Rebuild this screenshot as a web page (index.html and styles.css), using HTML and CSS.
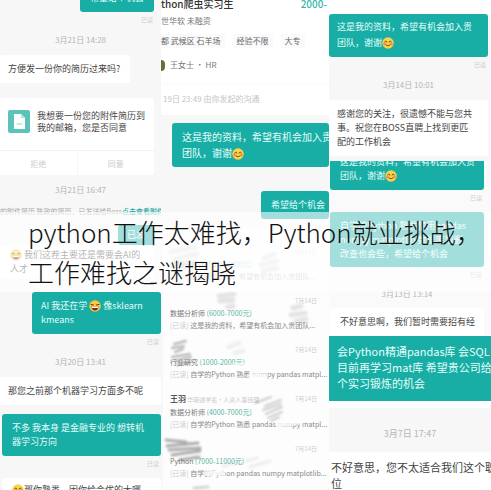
FILE: index.html
```
<!DOCTYPE html>
<html lang="zh-CN">
<head>
    <meta charset="UTF-8">
    <meta name="viewport" content="width=device-width, initial-scale=1.0">
    <title>python工作太难找</title>
    <link rel="stylesheet" href="styles.css">
</head>
<body>
    <svg class="defs" aria-hidden="true">
        <symbol id="smile" viewBox="0 0 24 24">
            <circle cx="12" cy="12" r="11.5" fill="#fbd34b"/>
            <path d="M5 10q2.5-4 5 0M14 10q2.5-4 5 0" fill="none" stroke="#6b3d12" stroke-width="2" stroke-linecap="round"/>
            <circle cx="5" cy="14" r="3" fill="#f58f53"/>
            <circle cx="19" cy="14" r="3" fill="#f58f53"/>
            <path d="M8 16q4 4 8 0" fill="none" stroke="#8c4b16" stroke-width="2" stroke-linecap="round"/>
        </symbol>
        <symbol id="laugh" viewBox="0 0 24 24">
            <circle cx="12" cy="12" r="11.5" fill="#fbc740"/>
            <path d="M4 9l5 1M20 9l-5 1" stroke="#5b3412" stroke-width="2" stroke-linecap="round"/>
            <path d="M5 13h14q-1 8-7 8t-7-8z" fill="#7b2f16"/>
            <path d="M6 13h12v3H6z" fill="#fff"/>
        </symbol>
    </svg>
    <main class="collage">
        <section class="column left">
            <div class="msg mine first">希望给个机会</div>
            <div class="read">已读</div>
            <div class="time">3月21日 14:28</div>
            <div class="msg">方便发一份你的简历过来吗?</div>
            <div class="card">
                <div class="card-body">
                    <svg class="file-icon" viewBox="0 0 22 23">
                        <rect width="22" height="23" rx="2" fill="#5bc3b9"/>
                        <path d="M6 4h7l4 4v11H6z" fill="#fff"/>
                        <path d="M13 4v4h4z" fill="#b5e3de"/>
                        <path d="M9 14h5" stroke="#8bd2cb"/>
                    </svg>
                    <p>我想要一份您的附件简历到<br>我的邮箱，您是否同意</p>
                </div>
                <div class="card-actions">
                    <button type="button">拒绝</button>
                    <button type="button">同意</button>
                </div>
            </div>
            <div class="time">3月21日 16:47</div>
            <div class="notice">的附件简历 陈政的简历，已发送给Boss<a href="#">点击查看附件</a></div>
            <div class="msg mine sent">已发</div>
            <div class="msg wide reply"><svg class="emoji"><use href="#laugh"/></svg> 我们这茬主要还是需要会AI的<br>人才</div>
            <div class="msg mine sk">AI 我还在学 <svg class="emoji"><use href="#laugh"/></svg> 像sklearn kmeans</div>
            <div class="read">已读</div>
            <div class="time">3月20日 13:41</div>
            <div class="msg full">那您之前那个机器学习方面多不呢</div>
            <div class="msg mine full">不多 我本身 是金融专业的 想转机<br>器学习方向</div>
            <div class="read">已读</div>
            <div class="msg full"><svg class="emoji"><use href="#smile"/></svg>那你熟悉，因你给会优的大哪</div>
        </section>

        <section class="column middle">
            <header class="job">
                <div class="job-title"><h2>thon爬虫实习生</h2><span class="salary">2000-</span></div>
                <div class="company">世华软 未融资</div>
                <div class="tags"><span>都 武候区 石羊场</span><span>经验不限</span><span>大专</span></div>
                <div class="hr"><i class="avatar"></i>王女士 · HR</div>
                <div class="started">19日 23:49 由你发起的沟通</div>
            </header>
            <div class="msg mine intro">这是我的资料，希望有机会加入贵<br>团队，谢谢<svg class="emoji"><use href="#smile"/></svg></div>
            <div class="msg mine chance">希望给个机会</div>
            <div class="chats">
                <div class="chat faded">
                    <div class="who"><span></span><time>7月14日</time></div>
                    <div class="role">数据分析师 <b>(6000-8000元)</b></div>
                    <div class="last"><i>[已读]</i> 这是我的资料，希望有机会加入贵团队...</div>
                </div>
                <div class="chat">
                    <div class="who"><span></span><time>7月14日</time></div>
                    <div class="role">数据分析师 <b>(6000-7000元)</b></div>
                    <div class="last"><i>[已读]</i> 这是我的资料，希望有机会加入贵团队...</div>
                </div>
                <div class="chat">
                    <div class="who"><span></span><time>7月14日</time></div>
                    <div class="role">行业研究 <b>(1000-2000元)</b></div>
                    <div class="last"><i>[已读]</i> 自学的Python 熟悉 numpy pandas matpl...</div>
                </div>
                <div class="chat">
                    <div class="who"><span><strong>王羽</strong> 华朝通学名·人资人事经理</span><time>7月14日</time></div>
                    <div class="role">数据分析师 <b>(4000-7000元)</b></div>
                    <div class="last"><i>[已读]</i> 自学的Python 熟悉 pandas numpy matpl...</div>
                </div>
                <div class="chat">
                    <div class="who"><span></span><time>7月14日</time></div>
                    <div class="role">Python <b>(7000-11000元)</b></div>
                    <div class="last"><i>[已读]</i> 自学的Python pandas numpy matplotlib...</div>
                </div>
                <svg class="smudges" viewBox="0 0 166 262" fill="none" stroke-linecap="round">
                    <filter id="soft"><feGaussianBlur stdDeviation="1"/></filter>
                    <g filter="url(#soft)">
                        <path d="M44 244h16M116 196l22-4M88 147h14M70 138h12" stroke="#fff" stroke-width="6" opacity=".8"/>
                        <g stroke="#aaa" stroke-width="5" opacity=".3">
                            <path d="M8 23l24-5M12 30l22-5M18 36l13-3"/>
                            <path d="M101 29l10-4M98 36l16-4M100 42l14-3"/>
                            <path d="M56 67l15-2M57 72l13-1M65 78l5-1"/>
                            <path d="M130 79l8-2M128 86l14-2M133 92l10-2"/>
                            <path d="M66 118l10-4M72 124l8-2" opacity=".5"/>
                        </g>
                        <g stroke="#777" stroke-width="2" opacity=".6">
                            <path d="M11 115l12-3M9 119l12-2M12 123l8-3M9 128l18-3M12 132l16-4M14 136l14-3"/>
                            <path d="M92 174l16-6M102 177l16-6M100 181l18-6M103 185l16-7M105 189l14-6M108 192l8-4" opacity=".6"/>
                        </g>
                        <g stroke="#777" stroke-width="3" opacity=".6">
                            <path d="M3 211l20 2M4 217l31-3M6 221l31-2M9 226l28-4M17 231l19-3"/>
                            <path d="M60 237l16-4M83 232l11-3M87 238l20-6" opacity=".2"/>
                            <path d="M31 259l14-1" opacity=".5"/>
                        </g>
                    </g>
                </svg>
            </div>
        </section>

        <section class="column right">
            <div class="panel panel-top">
                <div class="msg mine full tall">这是我的资料，希望有机会加入贵<br>团队，谢谢<svg class="emoji"><use href="#smile"/></svg></div>
                <div class="read">已读</div>
                <div class="time">3月14日 10:01</div>
                <div class="msg full">感谢您的关注，很遗憾不能与您共<br>事。祝您在BOSS直聘上找到更匹<br>配的工作机会</div>
            </div>
            <div class="panel panel-mid">
                <div class="msg mine full cut">这是我的资料，希望有机会加入贵<br>团队，谢谢<svg class="emoji"><use href="#smile"/></svg></div>
                <div class="read">已读</div>
                <div class="msg mine full">自学的Python 熟悉使用pandas<br>numpy matplotlib 数据库增删<br>改查也会些，希望给个机会</div>
                <div class="read">已读</div>
                <div class="time">3月13日 13:14</div>
                <div class="msg full">不好意思啊，我们暂时需要招有经</div>
            </div>
            <div class="panel panel-end">
                <div class="msg mine">会Python精通pandas库 会SQL<br>目前再学习mat库 希望贵公司给<br>个实习锻炼的机会</div>
                <div class="time">3月7日 17:47</div>
                <div class="msg">不好意思，您不太适合我们这个职<br>位</div>
            </div>
        </section>

        <h1 class="headline">python工作太难找，Python就业挑战，工作难找之谜揭晓</h1>
    </main>
</body>
</html>
```

FILE: styles.css
```
* {
    box-sizing: border-box;
}

body {
    margin: 0;
    font-family: 'Noto Sans CJK SC', sans-serif;
    font-size: 9px;
    line-height: 14px;
    color: #444;
    background-color: #fff;
}

h1, h2, p {
    margin: 0;
}

.defs {
    position: absolute;
    width: 0;
    height: 0;
}

.collage {
    position: relative;
    display: grid;
    grid-template-columns: 161fr 168fr 162fr;
    height: 100vh;
    overflow: hidden;
}

.column {
    display: flex;
    flex-direction: column;
    min-width: 0;
    overflow: hidden;
    background-color: #f7f7f7;
}

/* messages */
.msg {
    align-self: flex-start;
    flex-shrink: 0;
    padding: 7px 10px;
    background-color: #fff;
    border-radius: 3px;
    white-space: nowrap;
}

.mine {
    align-self: flex-end;
    background-color: #18ada5;
    color: #e4fffb;
}

.full {
    align-self: stretch;
}

.emoji {
    width: 12px;
    height: 12px;
    vertical-align: -3px;
}

.read {
    margin: 3px 0 0;
    padding-right: 2px;
    font-size: 6px;
    line-height: 10px;
    text-align: right;
    color: #ccc;
}

.time {
    margin: 9px 0;
    font-size: 8px;
    line-height: 12px;
    text-align: center;
    color: #b5b5b5;
}

/* left column */
.left > .msg {
    margin-left: 2px;
}

.left > .first {
    margin: -9px 7px 0 0;
    padding-top: 0;
}

.left > .first + .read {
    padding-right: 8px;
}

.left > .time + .msg {
    padding-left: 8px;
    margin-left: 0;
}

.left > .read + .msg {
    margin-top: 9px;
    padding-top: 5px;
}

.left > .full + .full {
    margin-top: 9px;
}

.card {
    flex-shrink: 0;
    margin: 15px 7px 0 0;
    background-color: #fff;
    border-radius: 3px;
}

.card-body {
    display: flex;
    gap: 7px;
    padding: 12px 8px 16px;
    line-height: 12px;
    white-space: nowrap;
    border-bottom: 1px solid #f3f3f3;
}

.file-icon {
    flex-shrink: 0;
    width: 22px;
    height: 23px;
}

.card-actions {
    display: flex;
}

.card-actions button {
    flex: 1;
    height: 24px;
    padding: 0;
    border: none;
    background: none;
    font-family: inherit;
    font-size: 8px;
    color: #ccc;
    cursor: pointer;
}

.card-actions button + button {
    border-left: 1px solid #f6f6f6;
}

.notice {
    flex-shrink: 0;
    font-size: 7px;
    line-height: 12px;
    white-space: nowrap;
    color: #aaa;
}

.notice a {
    color: #18a79f;
    font-weight: 500;
    text-decoration: none;
}

.left > .sent {
    margin: 8px 7px 0 0;
    padding: 3px 9px;
}

.left > .wide {
    align-self: stretch;
    margin: 0 7px 0 0;
    padding: 3px 10px;
}

.left > .sk {
    margin: 13px 0 0 32px;
    align-self: stretch;
    padding: 7px 9px;
    white-space: normal;
}

/* middle column */
.job {
    flex-shrink: 0;
    height: 115px;
    background-color: #fff;
    font-size: 8px;
    white-space: nowrap;
}

.job-title {
    display: flex;
    justify-content: space-between;
    margin-top: -3px;
    padding-right: 2px;
    font-size: 10px;
}

.job-title h2 {
    font-size: 10px;
    font-weight: 500;
    color: #333;
}

.salary {
    font-weight: 500;
    color: #35b5ac;
}

.company {
    margin-top: 3px;
    color: #777;
}

.tags {
    display: flex;
    gap: 8px;
    margin-top: 6px;
    color: #666;
}

.tags span {
    padding: 0 4px;
    background-color: #fafafa;
}

.tags span:first-child {
    padding-left: 0;
}

.hr {
    display: flex;
    align-items: center;
    gap: 5px;
    margin-top: 10px;
    color: #777;
}

.avatar {
    width: 4px;
    height: 11px;
    border-radius: 0 6px 6px 0;
    background-color: #6d6b3a;
}

.started {
    margin-top: 12px;
    padding: 7px 2px;
    border-top: 1px solid #fafafa;
    color: #c4c4c4;
}

.intro {
    margin: 8px 0 0 11px;
    align-self: stretch;
    padding: 6px 10px;
    font-size: 10px;
    line-height: 16px;
}

.chance {
    margin-top: 24px;
    padding-right: 4px;
}

.chats {
    position: relative;
    flex: 1;
    margin: 10px 0 0 2px;
    padding: 17px 8px 0 7px;
    background-color: #fdfdfd;
    font-size: 7px;
    line-height: 12px;
    white-space: nowrap;
}

.chat {
    margin-bottom: 13px;
}

.faded {
    opacity: 0.5;
}

.who {
    display: flex;
    justify-content: space-between;
    font-size: 6px;
    color: #ccc;
}

.who time {
    margin-right: 4px;
}

.who strong {
    font-size: 8px;
    font-weight: 500;
    color: #333;
}

.role {
    color: #777;
}

.role b {
    font-weight: 400;
    color: #5bb5a5;
}

.last {
    color: #888;
}

.last i {
    font-style: normal;
    color: #ccc;
}

.smudges {
    position: absolute;
    top: 0;
    left: 0;
    width: 166px;
    height: 262px;
}

/* right column */
.panel {
    flex-shrink: 0;
    display: flex;
    flex-direction: column;
}

.panel-top {
    padding: 14px 3px 5px 0;
    background: linear-gradient(#fff 14px, #f7f7f7 14px);
}

.panel-top .msg,
.panel-end .msg {
    padding-left: 8px;
}

.panel-top .tall {
    padding-top: 5px;
    padding-bottom: 6px;
    line-height: 16px;
}

.panel-mid {
    padding: 0 7px 0 1px;
    overflow: hidden;
    background-color: #fafafa;
}

.panel-mid .cut {
    margin-top: -13px;
}

.panel-mid .read + .msg {
    margin-top: 9px;
    padding-bottom: 6px;
}

.panel-mid .time {
    margin: 8px 0;
}

.panel-end {
    font-size: 11px;
    line-height: 16px;
}

.panel-end .msg {
    align-self: stretch;
    padding-right: 0;
    border-radius: 0;
}

.panel-end .mine {
    padding-bottom: 10px;
    border-bottom: 7px solid #fff;
    background-clip: padding-box;
}

.panel-end .time {
    margin: 0;
    padding: 20px 0 12px;
    font-size: 9px;
}

.panel-end .time + .msg {
    padding-left: 2px;
}

/* headline over the pictures */
.headline {
    position: absolute;
    top: 212px;
    left: 0;
    right: 0;
    padding: 0 0 0 28px;
    background-color: rgba(255, 255, 255, 0.6);
    font-size: 26px;
    font-weight: 300;
    line-height: 40px;
    color: #111;
}
```
